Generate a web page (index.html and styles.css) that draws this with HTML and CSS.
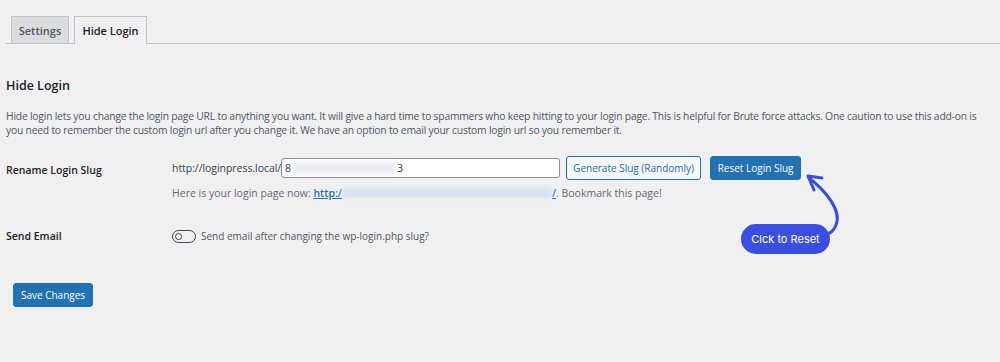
FILE: index.html
```html
<!DOCTYPE html>
<html>
<head>
<meta charset="utf-8">
<link rel="stylesheet" href="styles.css">
</head>
<body>
<div class="page">
  <nav class="tabs">
    <a class="tab">Settings</a>
    <a class="tab tab-active">Hide Login</a>
  </nav>
  <div class="content">
    <h2 class="title">Hide Login</h2>
    <p class="desc">Hide login lets you change the login page URL to anything you want. It will give a hard time to spammers who keep hitting to your login page. This is helpful for Brute force attacks. One caution to use this add-on is<br>you need to remember the custom login url after you change it. We have an option to email your custom login url so you remember it.</p>
    <div class="row row-slug">
      <div class="label">Rename Login Slug</div>
      <div class="field">
        <div class="slug-line">
          <span class="prefix">http://loginpress.local/</span>
          <div class="input"><span>8</span><span class="blur blur-in"></span><span>3</span></div>
          <button class="btn btn-secondary">Generate Slug (Randomly)</button>
          <button class="btn btn-primary">Reset Login Slug</button>
        </div>
        <div class="note">Here is your login page now: <a class="link">http:/<span class="blur blur-link"></span>/</a>. Bookmark this page!</div>
      </div>
    </div>
    <div class="row row-email">
      <div class="label">Send Email</div>
      <div class="field toggle-line">
        <span class="toggle"><span class="knob"></span></span>
        <span class="toggle-text">Send email after changing the wp-login.php slug?</span>
      </div>
    </div>
    <div class="submit">
      <button class="btn btn-primary btn-save">Save Changes</button>
    </div>
  </div>
  <div class="callout">Clck to Reset</div>
  <svg class="arrow" width="60" height="80" viewBox="0 0 60 80">
    <path d="M11 15 C 28 28, 44 48, 38 62 C 36 68, 32 70, 28 72" fill="none" stroke="#3a4ee0" stroke-width="3" stroke-linecap="round"/>
    <path d="M24 15 L 10 13 L 16 27" fill="none" stroke="#3a4ee0" stroke-width="3" stroke-linecap="round" stroke-linejoin="round"/>
  </svg>
</div>
</body>
</html>
```
FILE: styles.css
```css
html, body {
  margin: 0;
  padding: 0;
  background: #f0f0f1;
}
body {
  font-family: "Open Sans", "Noto Sans", sans-serif;
  font-size: 10.5px;
  color: #3c434a;
  width: 1000px;
  height: 362px;
  overflow: hidden;
}
.page {
  position: relative;
  height: 362px;
}
.tabs {
  display: flex;
  align-items: flex-end;
  gap: 5px;
  margin: 0 0 0 5px;
  padding: 16px 0 0 6px;
  border-bottom: 1px solid #c3c4c7;
  height: 27px;
}
.tab {
  display: flex;
  align-items: center;
  justify-content: center;
  height: 27px;
  box-sizing: border-box;
  border: 1px solid #c3c4c7;
  border-bottom: none;
  background: #dcdcde;
  color: #50575e;
  font-weight: 600;
  font-size: 11px;
  padding: 0;
  width: 58px;
  white-space: nowrap;
}
.tab-active {
  background: #f0f0f1;
  color: #1d2327;
  width: 73px;
  height: 28px;
  margin-bottom: -1px;
}
.content {
  padding: 0 0 0 6px;
}
.title {
  margin: 32px 0 0;
  font-size: 12.5px;
  font-weight: 600;
  color: #1d2327;
  line-height: 20px;
}
.desc {
  margin: 13px 0 0;
  line-height: 14px;
  font-size: 10.3px;
  color: #50575e;
  letter-spacing: -0.2px;
  white-space: nowrap;
}
.row {
  display: flex;
}
.label {
  width: 166px;
  flex: none;
  font-weight: 600;
  color: #1d2327;
  font-size: 10.5px;
}
.row-slug {
  margin-top: 19px;
}
.row-slug .label {
  padding-top: 7px;
}
.slug-line {
  display: flex;
  align-items: center;
  height: 24px;
}
.prefix {
  color: #3c434a;
  font-size: 10.5px;
  letter-spacing: -0.05px;
}
.input {
  width: 279px;
  height: 20px;
  box-sizing: border-box;
  border: 1px solid #8c8f94;
  border-radius: 3px;
  background: #fff;
  display: flex;
  align-items: center;
  padding-left: 3px;
  color: #2c3338;
  font-size: 10.5px;
}
.blur {
  display: inline-block;
  filter: blur(3px);
}
.blur-in {
  width: 104px;
  height: 8px;
  background: #e4e6ea;
  margin: 0 1px;
}
.btn {
  font-family: inherit;
  font-size: 10px;
  height: 24px;
  box-sizing: border-box;
  border-radius: 3px;
  padding: 0;
  cursor: pointer;
  white-space: nowrap;
}
.btn-secondary {
  margin-left: 6px;
  width: 135px;
  border: 1px solid #2271b1;
  background: #f6f7f7;
  color: #2271b1;
}
.btn-primary {
  margin-left: 9px;
  width: 91px;
  border: 1px solid #2271b1;
  background: #2271b1;
  color: #fff;
}
.note {
  margin-top: 6px;
  color: #646970;
  font-size: 10.5px;
  line-height: 15px;
}
.link {
  color: #2271b1;
  font-weight: 600;
  text-decoration: underline;
}
.blur-link {
  width: 210px;
  height: 10px;
  background: #d5e3f2;
  vertical-align: -1px;
  filter: blur(2px);
}
.row-email {
  margin-top: 28px;
  align-items: center;
}
.toggle-line {
  display: flex;
  align-items: center;
  gap: 5px;
}
.toggle {
  width: 24px;
  height: 13px;
  box-sizing: border-box;
  border: 1.5px solid #3c434a;
  border-radius: 8px;
  display: flex;
  align-items: center;
  padding-left: 2px;
}
.knob {
  width: 7px;
  height: 7px;
  box-sizing: border-box;
  border: 1.5px solid #3c434a;
  border-radius: 50%;
}
.toggle-text {
  color: #50575e;
  font-size: 10px;
}
.submit {
  margin-top: 40px;
  padding-left: 7px;
}
.btn-save {
  margin-left: 0;
  width: 80px;
}
.callout {
  position: absolute;
  left: 741px;
  top: 224px;
  width: 89px;
  height: 30px;
  border-radius: 15px;
  background: #3a4ee0;
  color: #fff;
  font-family: Inter, "Liberation Sans", sans-serif;
  font-size: 11px;
  display: flex;
  align-items: center;
  justify-content: center;
}
.arrow {
  position: absolute;
  left: 798px;
  top: 163px;
}
```
